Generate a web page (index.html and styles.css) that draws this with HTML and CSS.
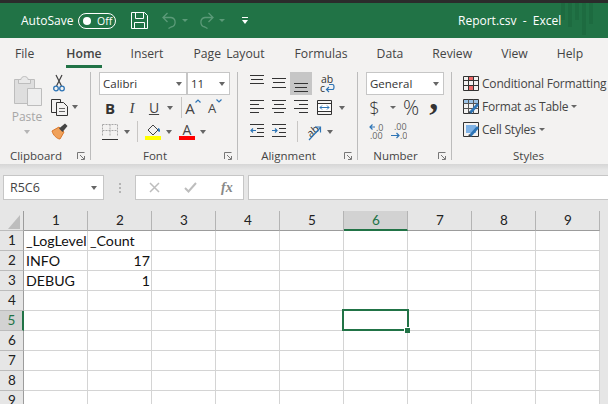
FILE: index.html
```html
<!DOCTYPE html>
<html lang="en">
    <head>
        <meta charset="UTF-8" />
        <title>Report.csv - Excel</title>
        <link rel="stylesheet" href="styles.css">
    </head>
    <body>
        <div class="topline"></div>

        <!-- Title bar -->
        <div class="titlebar">
            <span class="autosave">AutoSave</span>
            <span class="toggle"><i class="toggle-dot"></i>Off</span>
            <svg class="qa-save" width="17" height="17" viewBox="0 0 17 17" fill="none" stroke="#fff"><path d="M.5.5H13.5L16.5 3.5V16.5H.5Z"/><path d="M4.5.5V6.5H12.5V.5M3.5 16.5V10.5H13.5V16.5"/></svg>
            <svg class="qa-undo" width="15" height="17" viewBox="0 0 15 17" fill="none" stroke="#5b9a78" stroke-width="1.3"><path d="M5.5 1 1 5.500 5.500 10M1 5.500H9A4.800 4.800 0 0 1 9 15L6.500 16.500"/></svg>
            <i class="caret caret-dim qa-caret"></i>
            <svg class="qa-redo" width="15" height="17" viewBox="0 0 15 17" fill="none" stroke="#5b9a78" stroke-width="1.3"><path d="M9.500 1 14 5.500 9.500 10M14 5.500H6A4.800 4.800 0 0 0 6 15L8.500 16.500"/></svg>
            <i class="caret caret-dim qa-caret"></i>
            <svg class="qa-more" width="6" height="7" viewBox="0 0 6 7"><path d="M0 0H6V1H0ZM0 3H6L3 7Z" fill="#fff"/></svg>
            <span class="doc-title">Report.csv&nbsp; -&nbsp; Excel</span>
            <div class="title-bars"><i class="b1"></i><i class="b2"></i><i class="b3"></i><i class="b4"></i><i class="b5"></i></div>
        </div>

        <!-- Tabs -->
        <div class="tabs">
            <span class="tab tab-file">File</span>
            <span class="tab tab-active">Home</span>
            <span class="tab">Insert</span>
            <span class="tab tab-wide">Page Layout</span>
            <span class="tab">Formulas</span>
            <span class="tab">Data</span>
            <span class="tab">Review</span>
            <span class="tab">View</span>
            <span class="tab">Help</span>
        </div>

        <!-- Ribbon -->
        <div class="ribbon">
            <div class="group group-clipboard">
                <div class="group-body clip-body">
                    <div class="paste">
                        <svg width="29" height="31" viewBox="0 0 29 31"><path d="M1.500 4.500H21.500V28.500H1.500Z" fill="#dedede" stroke="#bdbdbd"/><path d="M5.500 4.500H8C8 0.500 15 0.500 15 4.500H17.500V8.500H5.500Z" fill="#e8e8e8" stroke="#bdbdbd"/><path d="M14.500 13.500H28.500V30.500H14.500Z" fill="#eeeeee" stroke="#bdbdbd"/></svg>
                        <span class="paste-label">Paste</span>
                        <i class="caret caret-light"></i>
                    </div>
                    <div class="clip-tools">
                        <div class="row">
                            <svg class="ml-2" width="12" height="18" viewBox="0 0 12 18" fill="none"><path d="M3 1 8.500 12M9 1 3.500 12" stroke="#404040" stroke-width="1.200"/><circle cx="3" cy="14.500" r="2.300" stroke="#2e75b6" stroke-width="1.300"/><circle cx="9" cy="14.500" r="2.300" stroke="#2e75b6" stroke-width="1.300"/></svg>
                        </div>
                        <div class="row">
                            <svg width="17" height="17" viewBox="0 0 17 17" fill="none" stroke="#333"><path d="M9.500 3.500V.5H.5V13.500H5.500"/><path d="M5.500 3.500H12.500L16.500 7.500V16.500H5.500Z" fill="#f3f2f1"/><path d="M8 9.500H14M8 12.500H14" stroke="#666"/></svg>
                            <i class="caret ml-4"></i>
                        </div>
                        <div class="row">
                            <svg width="17" height="17" viewBox="0 0 17 17"><path d="M1 8 8 4 13 9 9 16C6 16 2 12 1 8Z" fill="#f0a15a" stroke="#d9772b"/><path d="M8 5.500 14 .5 16.500 3 11.500 9Z" fill="#444"/></svg>
                        </div>
                    </div>
                </div>
                <div class="group-foot"><span class="group-label">Clipboard</span><svg class="launcher" width="8" height="8" viewBox="0 0 8 8" fill="none" stroke="#777"><path d="M.5 7V.5H7.500M3 3 7 7M4 7.500H7.500V4"/></svg></div>
            </div>
            <div class="group-sep"></div>

            <div class="group group-font">
                <div class="group-body">
                    <div class="row">
                        <div class="combo combo-font"><span>Calibri</span><i class="caret"></i></div>
                        <div class="combo combo-size"><span>11</span><i class="caret"></i></div>
                    </div>
                    <div class="row row-font2">
                        <span class="fmt fmt-b">B</span>
                        <span class="fmt fmt-i">I</span>
                        <span class="fmt fmt-u">U</span>
                        <i class="caret"></i>
                        <i class="mini-sep"></i>
                        <span class="fmt fmt-a">A<svg width="6" height="4" viewBox="0 0 6 4" fill="none" stroke="#2e75b6" stroke-width="1.200"><path d="M.5 3.500 3 1 5.500 3.500"/></svg></span>
                        <span class="fmt fmt-a fmt-a-small">A<svg width="6" height="4" viewBox="0 0 6 4" fill="none" stroke="#2e75b6" stroke-width="1.200"><path d="M.5.5 3 3 5.500.5"/></svg></span>
                    </div>
                    <div class="row row-font3">
                        <svg class="ml-3" width="16" height="16" viewBox="0 0 16 16" fill="none"><path d="M.5.5H15.500V12M.5.5V12M8 .5V12M.5 6.500H15.500" stroke="#a8a8a8" stroke-dasharray="2 1"/><path d="M0 15.500H16" stroke="#333"/></svg>
                        <i class="caret ml-6"></i>
                        <i class="mini-sep ml-7"></i>
                        <div class="color-btn ml-7">
                            <svg width="16" height="12" viewBox="0 0 16 12"><path d="M3 6 8 1 13 6 8 11Z" fill="#f3f2f1" stroke="#444"/><path d="M13 4C15 4 15.500 7 14.500 8 13 8 12.500 6 13 4Z" fill="#2e75b6"/></svg>
                            <i class="color-bar bar-yellow"></i>
                        </div>
                        <i class="caret ml-5"></i>
                        <div class="color-btn ml-7">
                            <span class="color-a">A</span>
                            <i class="color-bar bar-red"></i>
                        </div>
                        <i class="caret ml-5"></i>
                    </div>
                </div>
                <div class="group-foot"><span class="group-label">Font</span><svg class="launcher" width="8" height="8" viewBox="0 0 8 8" fill="none" stroke="#777"><path d="M.5 7V.5H7.500M3 3 7 7M4 7.500H7.500V4"/></svg></div>
            </div>
            <div class="group-sep"></div>

            <div class="group group-align">
                <div class="group-body">
                    <div class="row">
                        <span class="cell-btn"><svg width="14" height="23" viewBox="0 0 14 23"><path d="M0 3.500H14M1 7.500H13M0 11.500H14" stroke="#333"/></svg></span>
                        <span class="cell-btn"><svg width="14" height="23" viewBox="0 0 14 23"><path d="M0 6.500H14M1 10.500H13M0 15.500H14" stroke="#333"/></svg></span>
                        <span class="cell-btn cell-btn-on"><svg width="14" height="23" viewBox="0 0 14 23"><path d="M0 11.500H14M1 15.500H13M0 19.500H14" stroke="#333"/></svg></span>
                        <svg class="ml-7" width="16" height="23" viewBox="0 -2 16 23"><text x="2" y="9" class="svg-text">ab</text><text x="1" y="18" class="svg-text">c</text><path d="M10 10.500H13.500C15.500 10.500 15.500 15.500 13.500 15.500H8M10 13 7.500 15.500 10 18" fill="none" stroke="#2e75b6" stroke-width="1.200"/></svg>
                    </div>
                    <div class="row">
                        <span class="cell-btn"><svg width="14" height="23" viewBox="0 0 14 23"><path d="M0 4.500H14M0 8.500H9M0 12.500H14M0 16.500H9" stroke="#333"/></svg></span>
                        <span class="cell-btn"><svg width="14" height="23" viewBox="0 0 14 23"><path d="M0 4.500H14M2 8.500H12M0 12.500H14M2 16.500H12" stroke="#333"/></svg></span>
                        <span class="cell-btn"><svg width="14" height="23" viewBox="0 0 14 23"><path d="M0 4.500H14M5 8.500H14M0 12.500H14M5 16.500H14" stroke="#333"/></svg></span>
                        <svg class="ml-5" width="15" height="15" viewBox="0 0 15 15" fill="none"><path d="M.5.5H14.500V14.500H.5Z" stroke="#333"/><path d="M.5 3.500H14.500M.5 11.500H14.500" stroke="#333"/><path d="M1 4H14V11H1Z" fill="#fff"/><path d="M3 7.500H12M5 5.500 3 7.500 5 9.500M10 5.500 12 7.500 10 9.500" stroke="#2e75b6"/></svg>
                        <i class="caret ml-7"></i>
                    </div>
                    <div class="row">
                        <span class="cell-btn"><svg width="14" height="23" viewBox="0 0 14 23" fill="none"><path d="M0 4.500H14M7 8.500H14M7 12.500H14M0 16.500H14" stroke="#333"/><path d="M6 10.500H1M3 8.500 1 10.500 3 12.500" stroke="#2e75b6" stroke-width="1.200"/></svg></span>
                        <span class="cell-btn"><svg width="14" height="23" viewBox="0 0 14 23" fill="none"><path d="M0 4.500H14M7 8.500H14M7 12.500H14M0 16.500H14" stroke="#333"/><path d="M0 10.500H5M3 8.500 5 10.500 3 12.500" stroke="#2e75b6" stroke-width="1.200"/></svg></span>
                        <i class="mini-sep ml-7"></i>
                        <svg class="ml-7" width="17" height="23" viewBox="0 -2 17 23"><text x="2" y="14" class="svg-text" transform="rotate(-40 6 10)">ab</text><path d="M4 18 15 6M10 5H15.500V10.500" fill="none" stroke="#2e75b6" stroke-width="1.200"/></svg>
                        <i class="caret ml-5"></i>
                    </div>
                </div>
                <div class="group-foot"><span class="group-label">Alignment</span><svg class="launcher" width="8" height="8" viewBox="0 0 8 8" fill="none" stroke="#777"><path d="M.5 7V.5H7.500M3 3 7 7M4 7.500H7.500V4"/></svg></div>
            </div>
            <div class="group-sep"></div>

            <div class="group group-number">
                <div class="group-body">
                    <div class="row">
                        <div class="combo combo-format"><span>General</span><i class="caret"></i></div>
                    </div>
                    <div class="row row-number">
                        <span class="num-dollar">$</span>
                        <i class="caret caret-small"></i>
                        <span class="num-percent">%</span>
                        <span class="num-comma">,</span>
                    </div>
                    <div class="row">
                        <svg class="ml-3" width="16" height="23" viewBox="0 -2 16 23"><path d="M6 5H1M3.500 2.500 1 5 3.500 7.500" fill="none" stroke="#2e75b6" stroke-width="1.200"/><text x="7" y="9" class="svg-num">.0</text><text x="1" y="17" class="svg-num">.00</text></svg>
                        <svg class="ml-6" width="16" height="23" viewBox="0 -2 16 23"><text x="3" y="8" class="svg-num">.00</text><path d="M0 13.500H8M5.500 11 8 13.500 5.500 16" fill="none" stroke="#2e75b6" stroke-width="1.200"/><text x="9" y="17" class="svg-num">.0</text></svg>
                    </div>
                </div>
                <div class="group-foot"><span class="group-label">Number</span><svg class="launcher" width="8" height="8" viewBox="0 0 8 8" fill="none" stroke="#777"><path d="M.5 7V.5H7.500M3 3 7 7M4 7.500H7.500V4"/></svg></div>
            </div>
            <div class="group-sep"></div>

            <div class="group group-styles">
                <div class="group-body">
                    <div class="row style-row">
                        <svg width="16" height="15" viewBox="0 0 16 15" fill="none"><path d="M.5.5H15.500V14.500H.5Z" stroke="#333"/><path d="M5.500 1V4H10.500V1ZM5.500 10V14H10.500V10Z" fill="#ef6a6a"/><path d="M.5 4.500H15.500M.5 9.500H15.500M5.500 .5V14.500M10.500 .5V14.500" stroke="#333"/></svg>
                        <span>Conditional Formatting</span>
                    </div>
                    <div class="row style-row">
                        <svg width="16" height="15" viewBox="0 0 16 15" fill="none"><path d="M.5.5H15.500V14.500H.5Z" stroke="#333"/><path d="M1 1H15V4H1Z" fill="#9cc3e6"/><path d="M.5 4.500H15.500M.5 9.500H15.500M5.500 .5V14.500M10.500 .5V14.500" stroke="#555"/><path d="M6 13 14 4 16 6 8 15Z" fill="#2e75b6"/><path d="M5 15 6 12 8 14Z" fill="#444"/></svg>
                        <span>Format as Table</span>
                        <i class="caret caret-small"></i>
                    </div>
                    <div class="row style-row">
                        <svg width="16" height="15" viewBox="0 0 16 15" fill="none"><path d="M.5.5H15.500V14.500H.5Z" stroke="#333"/><path d="M3 3H13V11H3Z" fill="#7fb2e5"/><path d="M6 13 14 4 16 6 8 15Z" fill="#2e75b6"/><path d="M5 15 6 12 8 14Z" fill="#444"/></svg>
                        <span>Cell Styles</span>
                        <i class="caret caret-small"></i>
                    </div>
                </div>
                <div class="group-foot"><span class="group-label">Styles</span></div>
            </div>
        </div>
        <div class="ribbon-shadow"></div>

        <!-- Formula bar -->
        <div class="formula-bar">
            <div class="name-box"><span>R5C6</span><i class="caret"></i></div>
            <span class="fx-dots"></span>
            <div class="fx-box">
                <svg width="11" height="11" viewBox="0 0 11 11"><path d="M1 1 10 10M10 1 1 10" stroke="#bdbdbd" stroke-width="1.500"/></svg>
                <svg width="13" height="11" viewBox="0 0 13 11"><path d="M1 6 4.500 9.500 12 1" fill="none" stroke="#bdbdbd" stroke-width="2"/></svg>
                <span class="fx-label">fx</span>
            </div>
            <div class="fx-input"></div>
        </div>

        <!-- Sheet -->
        <div class="sheet">
            <table class="grid">
                <tr class="head-row">
                    <th class="corner"><svg width="12" height="14" viewBox="0 0 12 14"><path d="M12 0V14H0Z" fill="#bdbdbd"/></svg></th>
                    <th>1</th><th>2</th><th>3</th><th>4</th><th>5</th><th class="col-on">6</th><th>7</th><th>8</th><th>9</th>
                </tr>
                <tr><th>1</th><td>_LogLevel</td><td>_Count</td><td></td><td></td><td></td><td></td><td></td><td></td><td></td></tr>
                <tr><th>2</th><td>INFO</td><td class="num">17</td><td></td><td></td><td></td><td></td><td></td><td></td><td></td></tr>
                <tr><th>3</th><td>DEBUG</td><td class="num">1</td><td></td><td></td><td></td><td></td><td></td><td></td><td></td></tr>
                <tr><th>4</th><td></td><td></td><td></td><td></td><td></td><td></td><td></td><td></td><td></td></tr>
                <tr><th class="row-on">5</th><td></td><td></td><td></td><td></td><td></td><td></td><td></td><td></td><td></td></tr>
                <tr><th>6</th><td></td><td></td><td></td><td></td><td></td><td></td><td></td><td></td><td></td></tr>
                <tr><th>7</th><td></td><td></td><td></td><td></td><td></td><td></td><td></td><td></td><td></td></tr>
                <tr><th>8</th><td></td><td></td><td></td><td></td><td></td><td></td><td></td><td></td><td></td></tr>
                <tr><th>9</th><td></td><td></td><td></td><td></td><td></td><td></td><td></td><td></td><td></td></tr>
            </table>
            <div class="cell-cursor"><i class="cell-handle"></i></div>
        </div>
    </body>
</html>
```

FILE: styles.css
```css
/* Page */
html, body {
    margin: 0;
    height: 404px;
    overflow: hidden;
}

body {
    background-color: #e6e6e6;
    color: #444;
    font-family: "Open Sans", "Noto Sans", sans-serif;
    font-size: 12px;
}

i {
    display: block;
    font-style: normal;
}

svg {
    display: block;
    flex: none;
}

.topline {
    height: 3px;
    background-color: #2b2b2b;
}

/* Title bar */
.titlebar {
    position: relative;
    display: flex;
    align-items: center;
    height: 35px;
    padding-left: 21px;
    background-color: #217346;
    color: #fff;
}

.autosave {
    width: 57px;
    font-size: 12px;
}

.toggle {
    display: flex;
    align-items: center;
    box-sizing: border-box;
    width: 38px;
    height: 16px;
    padding-left: 4px;
    border: 1px solid #fff;
    border-radius: 8px;
    font-size: 10.5px;
}

.toggle-dot {
    width: 8px;
    height: 8px;
    margin-right: 6px;
    border-radius: 50%;
    background-color: #fff;
}

.qa-save { margin-left: 15px; }
.qa-undo { margin-left: 14px; }
.qa-redo { margin-left: 11px; }
.qa-more { margin-left: 17px; }
.qa-caret { margin-left: 5px; }

.doc-title {
    position: absolute;
    left: 458px;
    font-size: 12px;
}

.title-bars {
    position: absolute;
    top: 0;
    left: 561px;
    display: flex;
    gap: 3px;
}

.title-bars i {
    width: 4px;
    background-color: #1d6b40;
}

.b1 { height: 17px; }
.b2 { height: 24px; }
.b3 { height: 17px; }
.b4 { height: 32px; }
.b5 { height: 21px; }

/* Tabs */
.tabs {
    display: flex;
    height: 32px;
    padding-left: 15px;
    background-color: #f3f2f1;
    font-size: 12.2px;
    white-space: nowrap;
}

.tab {
    margin-right: 29px;
    line-height: 32px;
}

.tab-file { margin-right: 32px; }

.tab-active {
    height: 27px;
    border-bottom: 3px solid #217346;
    font-weight: 600;
}

.tab-wide {
    margin-left: 1px;
    margin-right: 30px;
    word-spacing: 2px;
}

/* Ribbon */
.ribbon {
    display: flex;
    height: 94px;
    background-color: #f3f2f1;
}

.ribbon-shadow {
    height: 6px;
    background: linear-gradient(#d6d6d6, #e6e6e6);
}

.group {
    display: flex;
    flex: none;
    flex-direction: column;
    height: 94px;
    box-sizing: border-box;
    padding-top: 2px;
}

.group-clipboard { width: 90px; padding-left: 7px; }
.group-font { width: 146px; padding-left: 8px; }
.group-align { width: 119px; padding-left: 9px; }
.group-number { width: 93px; padding-left: 8px; }
.group-styles { flex: 1; min-width: 0; padding-left: 11px; }

.group-sep {
    flex: none;
    width: 1px;
    margin: 2px 0 4px;
    background-color: #bcbcbc;
}

.mini-sep {
    width: 1px;
    height: 21px;
    background-color: #c8c6c4;
}

.group-body {
    display: flex;
    flex-direction: column;
    gap: 1px;
    height: 71px;
}

.clip-body {
    flex-direction: row;
    gap: 4px;
}

.group-styles .group-body { gap: 0; }

.group-foot {
    display: flex;
    align-items: center;
    height: 16px;
    margin-top: 5px;
    margin-left: -7px;
}

.group-font .group-foot { margin-left: -8px; }
.group-align .group-foot { margin-left: -9px; }
.group-number .group-foot { margin-left: -8px; }
.group-styles .group-foot { margin-left: -11px; padding-right: 3px; }

.group-label {
    flex: 1;
    text-align: center;
    font-size: 11.5px;
    line-height: 16px;
}

.launcher {
    margin-right: 5px;
    margin-left: 5px;
}

.row {
    display: flex;
    align-items: center;
    height: 23px;
}

.caret {
    flex: none;
    width: 0;
    height: 0;
    border-top: 4px solid #666;
    border-right: 3.5px solid transparent;
    border-left: 3.5px solid transparent;
}

.caret-dim { border-top-color: #5b9a78; border-top-width: 3px; border-left-width: 3px; border-right-width: 3px; }
.caret-light { border-top-color: #b5b5b5; }
.caret-small { border-top-width: 3px; border-left-width: 3px; border-right-width: 3px; }

.ml-2 { margin-left: 2px; }
.ml-3 { margin-left: 3px; }
.ml-4 { margin-left: 4px; }
.ml-5 { margin-left: 5px; }
.ml-6 { margin-left: 6px; }
.ml-7 { margin-left: 7px; }

/* Clipboard */
.paste {
    display: flex;
    flex-direction: column;
    align-items: center;
    width: 40px;
    padding-top: 3px;
}

.paste-label {
    margin-top: 2px;
    color: #a6a6a6;
    font-size: 12px;
    line-height: 17px;
}

.paste .caret { margin-top: 5px; }

.clip-tools { margin-top: -1px; }
.clip-tools .row { height: 24px; }

/* Font */
.combo {
    display: flex;
    align-items: center;
    justify-content: space-between;
    box-sizing: border-box;
    height: 23px;
    padding: 0 4px 0 3px;
    border: 1px solid #c6c6c6;
    background-color: #fff;
    color: #333;
    font-size: 11.5px;
}

.combo-font { width: 88px; }
.combo-size { width: 43px; }
.combo-format { width: 78px; }

.fmt {
    display: flex;
    align-items: flex-start;
    justify-content: center;
    width: 22px;
    color: #444;
    font-size: 15px;
    line-height: 20px;
}

.fmt-b { font-weight: 700; color: #333; }
.fmt-i { font-family: "Liberation Serif", serif; font-style: italic; }
.fmt-u { text-decoration: underline; font-size: 14px; }
.row-font2 .caret { margin-left: 2px; margin-right: 8px; }
.fmt-a svg { margin-top: 1px; }
.fmt-a-small { font-size: 13px; }

.color-btn {
    display: flex;
    flex-direction: column;
    align-items: center;
    width: 16px;
}

.color-a {
    height: 13px;
    color: #444;
    font-size: 14px;
    line-height: 13px;
}

.color-bar {
    width: 16px;
    height: 4px;
}

.bar-yellow { background-color: #ffff00; }
.bar-red { background-color: #ff0000; }

/* Alignment */
.cell-btn {
    display: flex;
    justify-content: center;
    width: 22px;
    height: 23px;
}

.cell-btn:first-child { margin-left: -1px; }
.cell-btn-on { background-color: #c6c6c6; }

.svg-text {
    fill: #333;
    font-family: "Open Sans", sans-serif;
    font-size: 10.5px;
}

.svg-num {
    fill: #666;
    font-family: "Open Sans", sans-serif;
    font-size: 9px;
}

/* Number */
.row-number { color: #333; }
.num-dollar { width: 17px; text-align: center; font-size: 18px; font-weight: 300; }
.row-number .caret { margin-left: 7px; }
.num-percent { margin-left: 7px; font-size: 20px; font-weight: 300; }
.num-comma {
    margin-left: 10px;
    margin-top: -22px;
    font-family: "Liberation Serif", serif;
    font-size: 36px;
    font-weight: 700;
    line-height: 16px;
}

/* Styles */
.style-row { gap: 3px; font-size: 12px; letter-spacing: -0.2px; white-space: nowrap; }

/* Formula bar */
.formula-bar {
    display: flex;
    align-items: flex-start;
    height: 41px;
    padding: 5px 0 0 3px;
    box-sizing: border-box;
}

.name-box, .fx-box, .fx-input {
    display: flex;
    align-items: center;
    box-sizing: border-box;
    height: 25px;
    border: 1px solid #c6c6c6;
    background-color: #fff;
}

.name-box {
    justify-content: space-between;
    width: 101px;
    padding: 0 6px;
    font-size: 12.5px;
}

.fx-dots {
    width: 2px;
    height: 10px;
    margin: 8px 14px 0 15px;
    background: repeating-linear-gradient(#b4b4b4 0 2px, transparent 2px 4px);
}

.fx-box {
    gap: 24px;
    width: 109px;
    padding-left: 13px;
}

.fx-label {
    color: #888;
    font-family: "Liberation Serif", serif;
    font-style: italic;
    font-weight: 700;
    font-size: 14px;
}

.fx-input {
    flex: 1;
    margin-left: 4px;
    border-right: 0;
}

/* Sheet */
.sheet {
    position: relative;
}

.grid {
    border-collapse: separate;
    border-spacing: 0;
    table-layout: fixed;
    width: 600px;
    background-color: #fff;
    color: #111;
    font-family: Lato, "Open Sans", sans-serif;
    font-size: 14.2px;
}

.grid th, .grid td {
    box-sizing: border-box;
    width: 64px;
    height: 20px;
    padding: 0 1px 0 2px;
    border-right: 1px solid #d4d4d4;
    border-bottom: 1px solid #d4d4d4;
    font-weight: 400;
    line-height: 19px;
    vertical-align: top;
    white-space: nowrap;
}

.grid th {
    background-color: #e6e6e6;
    color: #222;
    font-size: 13.5px;
    text-align: center;
}

.grid tr > th:first-child {
    width: 24px;
    border-right: 1px solid #9c9c9c;
    border-bottom: 1px solid #bcbcbc;
}

.head-row th {
    border-right: 1px solid #b4b4b4;
    border-bottom: 1px solid #9c9c9c;
}

.grid .corner {
    padding: 0;
    vertical-align: top;
}

.corner svg { margin: 4px 0 0 8px; }

.grid td.num { text-align: right; }

.grid th.col-on {
    background-color: #d2d2d2;
    border-bottom: 2px solid #217346;
    color: #217346;
    line-height: 18px;
}

.grid tr > th.row-on {
    background-color: #d2d2d2;
    border-right: 2px solid #217346;
    color: #217346;
}

.cell-cursor {
    position: absolute;
    top: 98px;
    left: 342px;
    box-sizing: border-box;
    width: 67px;
    height: 22px;
    border: 2px solid #217346;
}

.cell-handle {
    position: absolute;
    right: -3px;
    bottom: -4px;
    width: 5px;
    height: 5px;
    border-top: 1px solid #fff;
    border-left: 1px solid #fff;
    background-color: #217346;
}
```
